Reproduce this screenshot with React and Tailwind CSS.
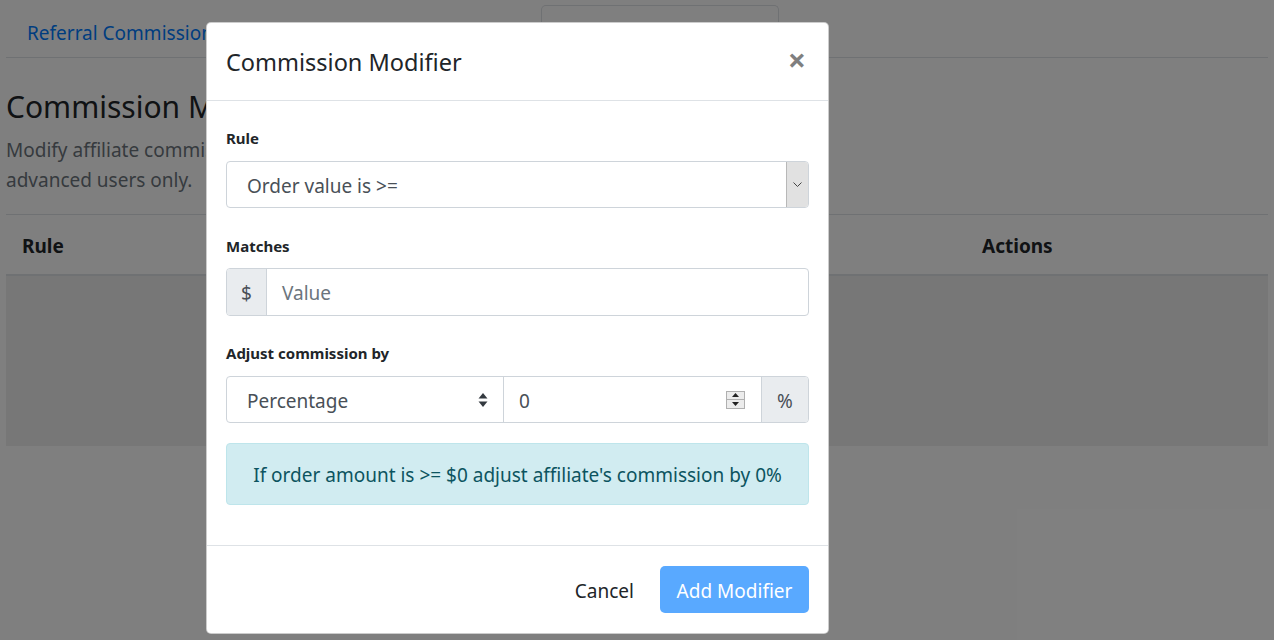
import React from "react";

const font = { fontFamily: '"Noto Sans", "Open Sans", sans-serif' };

function Page() {
  return (
    <div className="px-[6px] bg-white h-full">
      <div className="flex items-end h-[58px] border-b border-[#dee2e6]">
        <div className="w-[535px] h-[52px] flex items-center pl-[21px] pt-[5px] text-[19px] text-[#007bff]">
          Referral Commission
        </div>
        <div className="w-[238px] h-[52px] border border-b-0 border-[#dee2e6] rounded-t-[5px] bg-white"></div>
      </div>
      <h2 className="mt-[30px] text-[30px] leading-[38px] text-[#212529]">Commission Modifiers</h2>
      <p className="mt-[9px] text-[19px] leading-[30px] text-[#6c757d] w-[700px]">
        Modify affiliate commission rates based on order rules. This section is for advanced users only.
      </p>
      <div className="mt-[19px] border-t border-[#dee2e6]"></div>
      <div className="flex h-[61px] items-center pt-[4px] border-b-2 border-[#dee2e6] text-[19px] font-bold text-[#212529]">
        <div className="pl-[16px] w-[976px]">Rule</div>
        <div>Actions</div>
      </div>
      <div className="h-[170px] bg-[#efefef]"></div>
    </div>
  );
}

function Label({ children }) {
  return <div className="h-[22px] leading-[22px] text-[15px] font-bold text-[#212529]">{children}</div>;
}

function Modal() {
  return (
    <div className="absolute left-[206px] top-[22px] w-[623px] bg-white border border-black/20 rounded-[5px]">
      <div className="h-[78px] border-b border-[#dee2e6] flex items-center justify-between pl-[19px] pr-[22px]">
        <div className="text-[23.5px] text-[#212529] pt-[2px]">Commission Modifier</div>
        <div className="text-[32px] font-bold leading-none text-black/50 -mt-[4px]">×</div>
      </div>
      <div className="px-[19px] pt-[26px] pb-[40px]">
        <Label>Rule</Label>
        <div className="mt-[12px] h-[47px] border border-[#ced4da] rounded-[4px] flex items-stretch">
          <div className="flex-1 flex items-center pl-[20px] pt-[3px] text-[19px] text-[#495057]">Order value is &gt;=</div>
          <div className="w-[22px] bg-[#e1e1e1] border-l border-[#b8b8b8] rounded-r-[3px] flex items-center justify-center">
            <svg width="9" height="6" viewBox="0 0 9 6">
              <path d="M0.5 0.5 L4.5 4.5 L8.5 0.5" fill="none" stroke="#444" strokeWidth="1" />
            </svg>
          </div>
        </div>

        <div className="mt-[27px]">
          <Label>Matches</Label>
        </div>
        <div className="mt-[11px] h-[48px] border border-[#ced4da] rounded-[4px] flex items-stretch overflow-hidden">
          <div className="w-[40px] bg-[#e9ecef] border-r border-[#ced4da] flex items-center justify-center pt-[2px] text-[19px] text-[#495057]">$</div>
          <div className="flex-1 flex items-center pl-[15px] pt-[2px] text-[19px] text-[#6c757d]">Value</div>
        </div>

        <div className="mt-[26px]">
          <Label>Adjust commission by</Label>
        </div>
        <div className="mt-[12px] h-[47px] border border-[#ced4da] rounded-[4px] flex items-stretch overflow-hidden">
          <div className="w-[277px] flex items-center justify-between pl-[20px] pr-[15px] text-[19px] text-[#495057] border-r border-[#ced4da]">
            <span className="pt-[3px]">Percentage</span>
            <svg width="10" height="16" viewBox="0 0 10 16">
              <path d="M5 1 L9.5 6.5 L0.5 6.5 Z" fill="#343a40" />
              <path d="M5 15 L9.5 9.5 L0.5 9.5 Z" fill="#343a40" />
            </svg>
          </div>
          <div className="flex-1 flex items-center justify-between pl-[15px] pr-[16px] text-[19px] text-[#495057]">
            <span className="pt-[3px]">0</span>
            <div className="w-[19px] h-[18px] border border-[#b0b0b0] bg-[#ececec] flex flex-col">
              <div className="flex-1 flex items-center justify-center border-b border-[#b0b0b0]">
                <svg width="7" height="4" viewBox="0 0 7 4"><path d="M3.5 0 L7 4 L0 4 Z" fill="#222" /></svg>
              </div>
              <div className="flex-1 flex items-center justify-center">
                <svg width="7" height="4" viewBox="0 0 7 4"><path d="M0 0 L7 0 L3.5 4 Z" fill="#222" /></svg>
              </div>
            </div>
          </div>
          <div className="w-[47px] bg-[#e9ecef] border-l border-[#ced4da] flex items-center justify-center pt-[3px] text-[19px] text-[#495057]">%</div>
        </div>

        <div className="mt-[20px] h-[62px] bg-[#d1ecf1] border border-[#bee5eb] rounded-[4px] flex items-center justify-center pt-[3px] text-[19px] text-[#0c5460]">
          If order amount is &gt;= $0 adjust affiliate&apos;s commission by 0%
        </div>
      </div>
      <div className="border-t border-[#dee2e6] px-[19px] py-[20px] flex justify-end items-center">
        <div className="text-[19px] text-[#212529] px-[16px] pt-[3px] h-[47px] flex items-center mr-[10px]">Cancel</div>
        <div className="w-[149px] h-[47px] rounded-[5px] bg-[#59a9ff] text-white text-[19px] pt-[3px] flex items-center justify-center">
          Add Modifier
        </div>
      </div>
    </div>
  );
}

export default function App() {
  return (
    <div className="relative w-full h-[640px] overflow-hidden" style={font}>
      <Page />
      <div className="absolute inset-0 bg-black/50"></div>
      <Modal />
    </div>
  );
}
